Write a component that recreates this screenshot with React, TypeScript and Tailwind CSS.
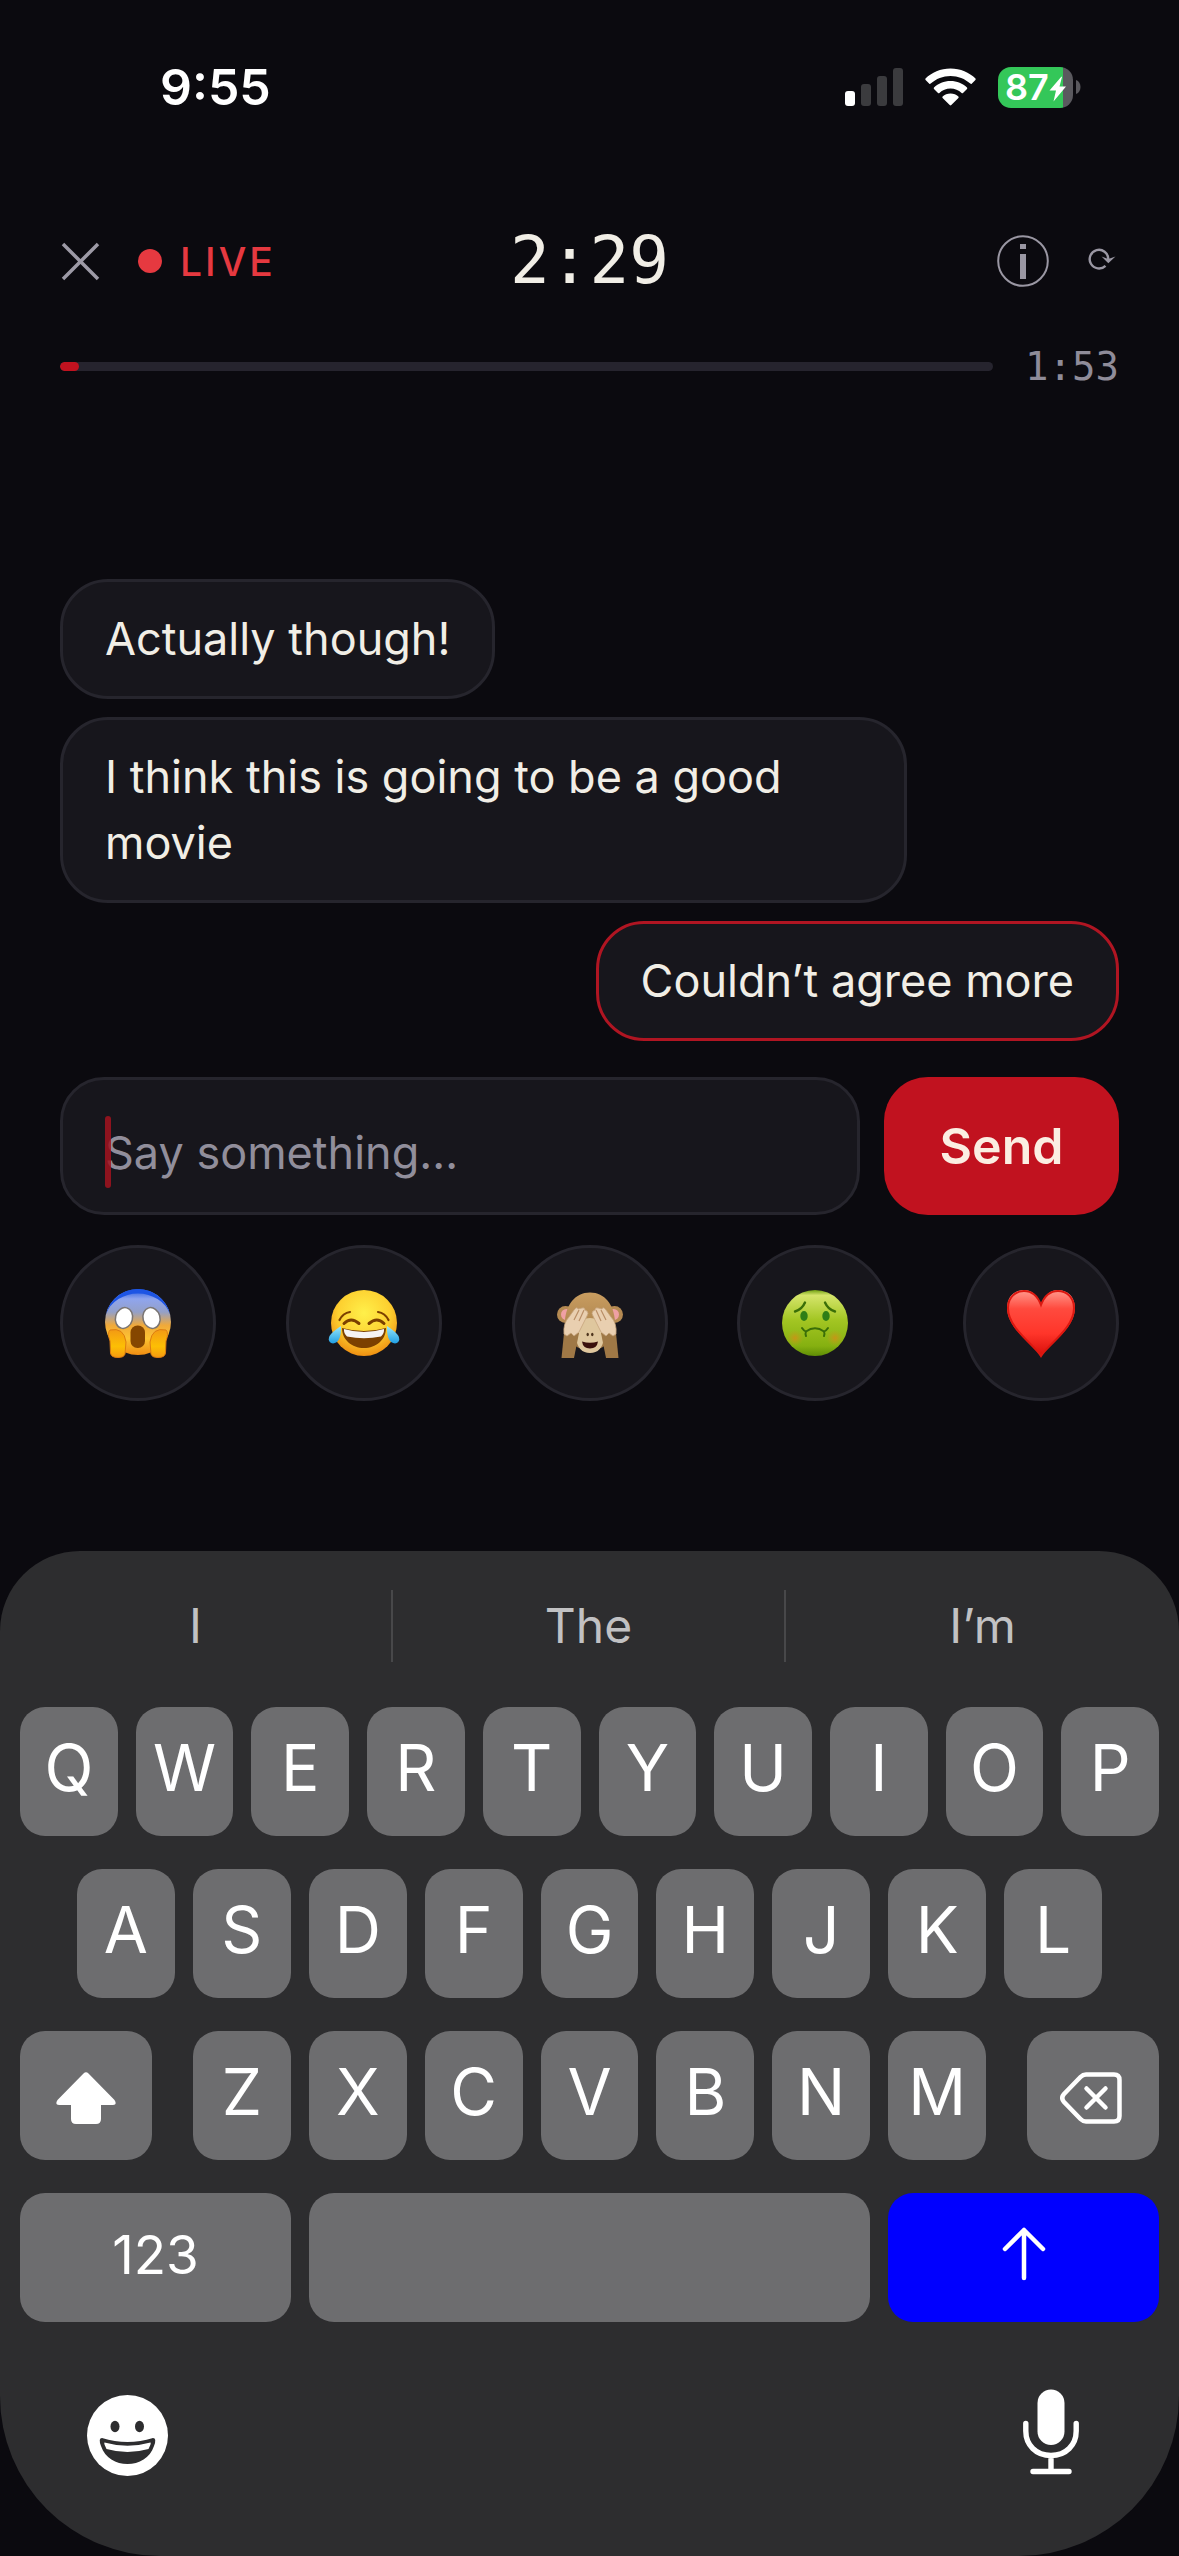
import { useState, type ReactNode } from "react";
import clsx from "clsx";

type Message = {
    id: number;
    text: string;
    mine?: boolean;
};

const messages: Message[] = [
    { id: 1, text: "Actually though!" },
    { id: 2, text: "I think this is going to be a good movie" },
    { id: 3, text: "Couldn’t agree more", mine: true },
];

const suggestions = ["I", "The", "I’m"];

const StatusBar = () => (
    <div className="flex items-center justify-between h-[174px] pl-40 pr-[98px] text-white">
        <span className="text-[50px] leading-none font-semibold">9:55</span>
        <div className="flex items-center gap-[22px]">
            <svg width="58" height="38" viewBox="0 0 58 38" aria-hidden="true">
                <rect x="0" y="23" width="10" height="15" rx="3" fill="#fff" />
                <rect x="16" y="16" width="10" height="22" rx="3" fill="#3b3b3e" />
                <rect x="32" y="8" width="10" height="30" rx="3" fill="#3b3b3e" />
                <rect x="48" y="0" width="10" height="38" rx="3" fill="#3b3b3e" />
            </svg>
            <svg width="51" height="38" viewBox="0 0 51 38" fill="#fff" aria-hidden="true">
                <path d="M25.500 0.500C35.500 0.500 44.300 4.500 50.500 10.500Q51 11.300 50.400 12L46.700 15.700Q46 16.200 45.300 15.600C40 10.800 33 8 25.500 8S11 10.800 5.700 15.600Q5 16.200 4.300 15.700L0.600 12Q0 11.300 0.500 10.500C6.700 4.500 15.500 0.500 25.500 0.500Z" />
                <path d="M25.500 13C32 13 37.800 15.500 42 19.500Q42.600 20.200 42 20.900L38 24.900Q37.300 25.500 36.600 24.900C33.600 22.200 29.800 20.500 25.500 20.500S17.400 22.200 14.400 24.900Q13.700 25.500 13 24.900L9 20.900Q8.400 20.200 9 19.500C13.200 15.500 19 13 25.500 13Z" />
                <path d="M25.500 25.500C28.600 25.500 31.400 26.700 33.400 28.500Q34 29.200 33.400 29.900L26.300 37Q25.500 37.800 24.700 37L17.600 29.900Q17 29.200 17.600 28.500C19.600 26.700 22.400 25.500 25.500 25.500Z" />
            </svg>
            <div className="flex items-center gap-[3px]">
                <div className="relative flex items-center w-[75px] h-[41px] pl-[7px] rounded-[13px] overflow-hidden bg-[linear-gradient(to_right,#34c759_87%,#5a595e_87%)]">
                    <span className="text-[36px] leading-none font-semibold">87</span>
                    <svg className="absolute right-[6px] top-[9px]" width="18" height="26" viewBox="0 0 18 26" fill="#fff" aria-hidden="true">
                        <path d="M12.500 0.500L0.500 14.500H7L4.500 25.500L17 10.500H10.500L13 1Z" />
                    </svg>
                </div>
                <svg width="5" height="14" viewBox="0 0 5 14" aria-hidden="true">
                    <path d="M0 0C6 2 6 12 0 14Z" fill="#5a595e" />
                </svg>
            </div>
        </div>
    </div>
);

const Header = () => (
    <header className="grid grid-cols-[1fr_auto_1fr] items-center h-[110px] mt-8 px-[60px]">
        <div className="flex items-center">
            <button type="button" aria-label="Close">
                <svg width="40" height="40" viewBox="0 0 40 40" stroke="#9d9aa6" strokeWidth="3.500" aria-hidden="true">
                    <path d="M3 3L38 38M38 3L3 38" />
                </svg>
            </button>
            <span className="size-6 ml-[38px] rounded-full bg-[#e63940]" />
            <span className="ml-[18px] text-[39px] leading-none font-medium tracking-[3px] text-[#e63940]">
                LIVE
            </span>
        </div>
        <h1 className="font-['DejaVu_Sans_Mono',monospace] text-[66px] leading-none text-[#f1eee6]">
            2:29
        </h1>
        <div className="flex items-center justify-end gap-[38px] pr-0.5">
            <button type="button" aria-label="Info">
                <svg width="52" height="52" viewBox="0 0 52 52" aria-hidden="true">
                    <circle cx="26" cy="26" r="24.800" fill="none" stroke="#9a97a3" strokeWidth="2" />
                    <rect x="23" y="9" width="6" height="5" fill="#9a97a3" />
                    <rect x="23" y="19" width="6" height="25" fill="#9a97a3" />
                </svg>
            </button>
            <button type="button" aria-label="Sync">
                <svg width="30" height="30" viewBox="0 0 30 30" fill="none" aria-hidden="true">
                    <path d="M18.500 19.800A9.300 9.300 0 1 1 21.300 13V15" stroke="#9a97a3" strokeWidth="2.400" />
                    <path d="M14.500 10.500L21.300 17.300L28.500 10.500L21.300 13Z" fill="#9a97a3" />
                </svg>
            </button>
        </div>
    </header>
);

const Progress = ({ value }: { value: number }) => (
    <div className="flex items-center gap-8 h-[60px] mt-5 px-[60px]">
        <div className="flex-1 h-[9px] rounded-full overflow-hidden bg-[#26242e]">
            <div className="h-full rounded-full bg-[#c1121f]" style={{ width: `${value}%` }} />
        </div>
        <span className="font-['DejaVu_Sans_Mono',monospace] text-[39px] leading-none text-[#8f8c99]">
            1:53
        </span>
    </div>
);

const Bubble = ({ text, mine }: Message) => (
    <li
        className={clsx(
            "max-w-4/5 px-[42px] py-6 rounded-[48px] border-3 bg-[#17161c] text-[45px] leading-[66px] text-[#f1eee6]",
            mine ? "self-end border-[#b01522]" : "self-start border-[#26252d]"
        )}
    >
        {text}
    </li>
);

const ScreamFace = () => (
    <svg width="72" height="72" viewBox="0 0 72 72" aria-hidden="true">
        <defs>
            <linearGradient id="scream" x1="0" y1="0" x2="0" y2="1">
                <stop offset="0" stopColor="#2258e0" />
                <stop offset="0.150" stopColor="#8fa5ee" />
                <stop offset="0.350" stopColor="#94a0c8" />
                <stop offset="0.550" stopColor="#f0a93a" />
                <stop offset="0.750" stopColor="#fdc432" />
                <stop offset="1" stopColor="#f08d12" />
            </linearGradient>
            <linearGradient id="hand" x1="0" y1="0" x2="0" y2="1">
                <stop offset="0" stopColor="#f39a14" />
                <stop offset="0.600" stopColor="#fdbf04" />
                <stop offset="1" stopColor="#f59a10" />
            </linearGradient>
        </defs>
        <circle cx="36" cy="35" r="33" fill="url(#scream)" />
        <path d="M4 27A33 33 0 0 1 68 27A34 31 0 0 0 4 27Z" fill="#1d55e4" />
        <ellipse cx="22" cy="31" rx="8.500" ry="10.500" fill="#fff" stroke="#7a7573" strokeWidth="1.500" transform="rotate(15 22 31)" />
        <ellipse cx="49.500" cy="31" rx="8.500" ry="10.500" fill="#fff" stroke="#7a7573" strokeWidth="1.500" transform="rotate(-15 49.500 31)" />
        <rect x="28.500" y="38.500" width="14.500" height="22.500" rx="7" fill="#854600" />
        <path d="M8 43Q22 40 24 55L23 67Q22 70.500 16 70.500Q9 70.500 8.500 66L8 54Q5 46 8 43Z" fill="url(#hand)" stroke="#dd7c12" />
        <path d="M64 43Q50 40 48 55L49 67Q50 70.500 56 70.500Q63 70.500 63.500 66L64 54Q67 46 64 43Z" fill="url(#hand)" stroke="#dd7c12" />
    </svg>
);

const JoyFace = () => (
    <svg width="72" height="72" viewBox="0 0 72 72" aria-hidden="true">
        <defs>
            <radialGradient id="joy" cx="0.500" cy="0.350" r="0.650">
                <stop offset="0" stopColor="#fff04a" />
                <stop offset="0.600" stopColor="#fdd030" />
                <stop offset="1" stopColor="#ef9012" />
            </radialGradient>
            <linearGradient id="tear" x1="0" y1="0" x2="0" y2="1">
                <stop offset="0" stopColor="#9be8fb" />
                <stop offset="1" stopColor="#1f9fe4" />
            </linearGradient>
        </defs>
        <circle cx="36" cy="36" r="33" fill="url(#joy)" />
        <g fill="none" stroke="#7b4000" strokeLinecap="round">
            <path d="M11.500 33Q15 26 22 25" strokeWidth="2.200" />
            <path d="M60.500 33Q57 26 50 25" strokeWidth="2.200" />
            <path d="M16 36.500Q23 29.500 31 36.500" strokeWidth="3" />
            <path d="M41 36.500Q49 29.500 56 36.500" strokeWidth="3" />
        </g>
        <path d="M14 41Q36 47 58 41C58 53 48 61 36 61S14 53 14 41Z" fill="#7b4000" />
        <path d="M16 42Q36 48 56 42Q56.500 46 53 49.500Q36 53 19 49.500Q15.500 46 16 42Z" fill="#f6f3f2" />
        <path d="M13 39Q13.500 56 5 56.500Q-1 55 1.500 49Q4 45 13 39Z" fill="url(#tear)" />
        <path d="M59 39Q58.500 56 67 56.500Q73 55 70.500 49Q68 45 59 39Z" fill="url(#tear)" />
    </svg>
);

const MonkeyFace = () => (
    <svg width="72" height="72" viewBox="0 0 72 72" aria-hidden="true">
        <defs>
            <linearGradient id="fur" x1="0" y1="0" x2="0" y2="1">
                <stop offset="0" stopColor="#c99d60" />
                <stop offset="1" stopColor="#9b7443" />
            </linearGradient>
        </defs>
        <circle cx="11.500" cy="27.500" r="8.500" fill="#b58a52" />
        <circle cx="60.500" cy="27.500" r="8.500" fill="#b58a52" />
        <circle cx="12.500" cy="27.500" r="5.500" fill="#efa0a4" />
        <circle cx="59.500" cy="27.500" r="5.500" fill="#efa0a4" />
        <path d="M36 5.500C51 5.500 60 18 61 34C62 48 55 63 36 63S10 48 11 34C12 18 21 5.500 36 5.500Z" fill="url(#fur)" />
        <path d="M36 31C48 31 51 42 50 51Q48 66 36 66Q24 66 22 51C21 42 24 31 36 31Z" fill="#dfc79e" />
        <path d="M28 54.500Q36 57 44 54.500Q43 61.500 36 61.500T28 54.500Z" fill="#3a100c" />
        <ellipse cx="33.700" cy="47.500" rx="1.200" ry="1.800" fill="#4d341c" />
        <ellipse cx="38.300" cy="47.500" rx="1.200" ry="1.800" fill="#4d341c" />
        <path d="M10 46L25 46L20 71H7.500Z" fill="#9f7846" />
        <path d="M62 46L47 46L52 71H64.500Z" fill="#9f7846" />
        <g fill="#e9cfb0" stroke="#c5a37c" strokeWidth="0.800">
            <path d="M10 47Q9 36 15 30L20 23Q23 19 24 22L28 21Q31 20 31 23L33 24Q35 26 33 29L25 45L20 49L17 46L13 49Z" />
            <path d="M62 47Q63 36 57 30L52 23Q49 19 48 22L44 21Q41 20 41 23L39 24Q37 26 39 29L47 45L52 49L55 46L59 49Z" />
        </g>
        <path d="M20 33L25 23M25 34L30 23M52 33L47 23M47 34L42 23" stroke="#b98e67" strokeWidth="1.200" />
    </svg>
);

const NauseaFace = () => (
    <svg width="72" height="72" viewBox="0 0 72 72" aria-hidden="true">
        <defs>
            <linearGradient id="sick" x1="0" y1="0" x2="0" y2="1">
                <stop offset="0" stopColor="#6f9f12" />
                <stop offset="0.080" stopColor="#d5e56b" />
                <stop offset="0.450" stopColor="#a3c623" />
                <stop offset="0.850" stopColor="#85b010" />
                <stop offset="1" stopColor="#5f8d06" />
            </linearGradient>
            <radialGradient id="cheek">
                <stop offset="0" stopColor="#cf9216" stopOpacity="0.900" />
                <stop offset="1" stopColor="#b8a51a" stopOpacity="0" />
            </radialGradient>
        </defs>
        <circle cx="36" cy="36" r="33" fill="url(#sick)" />
        <circle cx="16" cy="51" r="8.500" fill="url(#cheek)" />
        <circle cx="56" cy="51" r="8.500" fill="url(#cheek)" />
        <g fill="none" stroke="#3a6e08" strokeWidth="2.400" strokeLinecap="round">
            <path d="M16 24.500Q23 22.500 26 15.500" />
            <path d="M56 24.500Q49 22.500 46 15.500" />
            <path d="M23 41Q25 44 27 44.500M27 49Q26 47 27 44.500Q36 38 45 44.500Q46 47 45 49M45 44.500Q47 44 49 41" strokeWidth="2" />
        </g>
        <ellipse cx="25" cy="29" rx="3.700" ry="5" fill="#2f7d16" />
        <ellipse cx="47" cy="29" rx="3.700" ry="5" fill="#2f7d16" />
    </svg>
);

const Heart = () => (
    <svg width="72" height="72" viewBox="0 0 72 72" aria-hidden="true">
        <defs>
            <linearGradient id="heart" x1="0" y1="0" x2="0" y2="1">
                <stop offset="0" stopColor="#ff9a8e" />
                <stop offset="0.280" stopColor="#ff4a3e" />
                <stop offset="0.650" stopColor="#ff352a" />
                <stop offset="1" stopColor="#d60c08" />
            </linearGradient>
        </defs>
        <path d="M36 70C30 59 2 42 2 21C2 9 10 3 19 3C27 3 33 9 36 17C39 9 45 3 53 3C62 3 70 9 70 21C70 42 42 59 36 70Z" fill="url(#heart)" />
        <path d="M36 69C30 58 3 42 3 21C3 10 11 4 19 4C27 4 33 10 36 18C39 10 45 4 53 4C61 4 69 10 69 21C69 42 42 58 36 69Z" fill="none" stroke="#dc1810" strokeWidth="2" />
    </svg>
);

const reactions = [
    { label: "Scared", icon: <ScreamFace /> },
    { label: "Funny", icon: <JoyFace /> },
    { label: "Can't look", icon: <MonkeyFace /> },
    { label: "Gross", icon: <NauseaFace /> },
    { label: "Love", icon: <Heart /> },
];

type KeyProps = {
    children?: ReactNode;
    label?: string;
    className?: string;
};

const Key = ({ children, label, className = "flex-1 pb-2 bg-[#6d6d6f]" }: KeyProps) => (
    <button
        type="button"
        aria-label={label}
        className={clsx(
            "flex items-center justify-center h-[129px] rounded-[25px] text-[64px] leading-none text-white",
            className
        )}
    >
        {children}
    </button>
);

const Keyboard = () => (
    <section
        aria-label="Keyboard"
        className="mt-auto pt-[39px] rounded-t-[80px] rounded-b-[160px] bg-[#2d2d2f]"
    >
        <div className="grid grid-cols-3 h-[72px] divide-x-2 divide-[#48484a]">
            {suggestions.map((word) => (
                <button key={word} type="button" className="text-[48px] leading-none text-[#c1c1c3]">
                    {word}
                </button>
            ))}
        </div>

        <div className="flex flex-col gap-[33px] mt-[45px] px-5">
            <div className="flex gap-[18px]">
                {"QWERTYUIOP".split("").map((letter) => (
                    <Key key={letter}>{letter}</Key>
                ))}
            </div>
            <div className="flex gap-[18px] px-[57px]">
                {"ASDFGHJKL".split("").map((letter) => (
                    <Key key={letter}>{letter}</Key>
                ))}
            </div>
            <div className="flex gap-[41px]">
                <Key label="Shift" className="w-[132px] pt-1 bg-[#6d6d6f]">
                    <svg width="60" height="52" viewBox="0 0 60 52" fill="#fff" aria-hidden="true">
                        <path d="M27.500 1.500Q30 -1 32.500 1.500L58.500 28Q61.500 33 57 33H45V47Q45 52 40 52H20Q15 52 15 47V33H3Q-1.500 33 1.500 28Z" />
                    </svg>
                </Key>
                <div className="flex flex-1 gap-[18px]">
                    {"ZXCVBNM".split("").map((letter) => (
                        <Key key={letter}>{letter}</Key>
                    ))}
                </div>
                <Key label="Delete" className="w-[132px] pt-1 pr-1 bg-[#6d6d6f]">
                    <svg width="62" height="52" viewBox="0 0 62 52" fill="none" stroke="#fff" strokeWidth="4.500" strokeLinecap="round" strokeLinejoin="round" aria-hidden="true">
                        <path d="M26 2.500H54Q59.500 2.500 59.500 8V44Q59.500 49.500 54 49.500H26Q23 49.500 20.500 47L4 30Q0.500 26 4 22L20.500 5Q23 2.500 26 2.500Z" />
                        <path d="M26.500 16.500L45.500 35.500M45.500 16.500L26.500 35.500" />
                    </svg>
                </Key>
            </div>
            <div className="flex gap-[18px]">
                <Key className="w-[271px] pb-1 bg-[#6d6d6f]">
                    <span className="text-[53px]">123</span>
                </Key>
                <Key label="Space" />
                <Key label="Return" className="w-[271px] pb-2 bg-[#0000ff]">
                    <svg width="44" height="54" viewBox="0 0 44 54" fill="none" stroke="#fff" strokeWidth="4.500" strokeLinecap="round" strokeLinejoin="round" aria-hidden="true">
                        <path d="M22 51V3M3 22L22 3L41 22" />
                    </svg>
                </Key>
            </div>
        </div>

        <div className="flex items-center justify-between h-[234px] pb-2 px-[87px]">
            <button type="button" aria-label="Emoji">
                <svg width="81" height="81" viewBox="0 0 81 81" aria-hidden="true">
                    <circle cx="40.500" cy="40.500" r="40.500" fill="#fff" />
                    <ellipse cx="28" cy="31.500" rx="4.500" ry="5.700" fill="#2d2d2f" />
                    <ellipse cx="52.500" cy="31.500" rx="4.500" ry="5.700" fill="#2d2d2f" />
                    <path d="M15 43Q40.500 51 66 43Q70 43 67 51C63 63 52 69 40.500 69S18 63 14 51Q11 43 15 43Z" fill="#2d2d2f" />
                    <path d="M17.500 47.500Q40.500 54 63.500 47.500Q64.500 48 61.500 54Q40.500 60 19.500 54Q16.500 48 17.500 47.500Z" fill="#fff" />
                </svg>
            </button>
            <button type="button" aria-label="Dictate" className="pr-[13px] pb-1.5">
                <svg width="56" height="86" viewBox="0 0 56 86" fill="none" aria-hidden="true">
                    <rect x="14.500" y="0.500" width="27" height="55.500" rx="13.500" fill="#fff" />
                    <path d="M2.800 34.500V42C2.800 56 13 66.500 28 66.500S53.200 56 53.200 42V34.500M28 67V81M10 82.500H46" stroke="#fff" strokeWidth="5.400" strokeLinecap="round" />
                </svg>
            </button>
        </div>
    </section>
);

const App = () => {
    const [draft, setDraft] = useState("");

    return (
        <div className="flex flex-col min-h-screen bg-[#0b0a0f] font-[Inter,'Liberation_Sans',sans-serif]">
            <StatusBar />
            <Header />
            <Progress value={2} />

            <main className="mt-[183px] px-[60px]">
                <ul className="flex flex-col gap-[18px]">
                    {messages.map((message) => (
                        <Bubble key={message.id} {...message} />
                    ))}
                </ul>

                <form
                    className="flex gap-6 mt-9"
                    onSubmit={(e) => {
                        e.preventDefault();
                        setDraft("");
                    }}
                >
                    <div className="relative flex-1">
                        <input
                            type="text"
                            aria-label="Message"
                            placeholder="Say something…"
                            autoComplete="off"
                            value={draft}
                            onChange={(e) => setDraft(e.target.value)}
                            className="w-full h-[138px] px-[42px] pt-3 rounded-[44px] border-3 border-[#26252d] bg-[#17161c] text-[45px] text-[#f1eee6] placeholder:text-[#918e9b] caret-[#c1121f] outline-none"
                        />
                        {!draft && (
                            <span className="absolute left-[45px] top-[39px] w-[6px] h-[72px] rounded-full bg-[#a3131f]/85" />
                        )}
                    </div>
                    <button
                        type="submit"
                        className="w-[235px] h-[138px] rounded-[44px] bg-[#c1121f] text-[50px] leading-none font-semibold text-[#fbeee2]"
                    >
                        Send
                    </button>
                </form>

                <div className="flex justify-between mt-[30px]">
                    {reactions.map(({ label, icon }) => (
                        <button
                            key={label}
                            type="button"
                            aria-label={label}
                            className="flex items-center justify-center size-[156px] rounded-full border-3 border-[#26252d] bg-[#17161c]"
                        >
                            {icon}
                        </button>
                    ))}
                </div>
            </main>

            <Keyboard />
        </div>
    );
};

export default App;
